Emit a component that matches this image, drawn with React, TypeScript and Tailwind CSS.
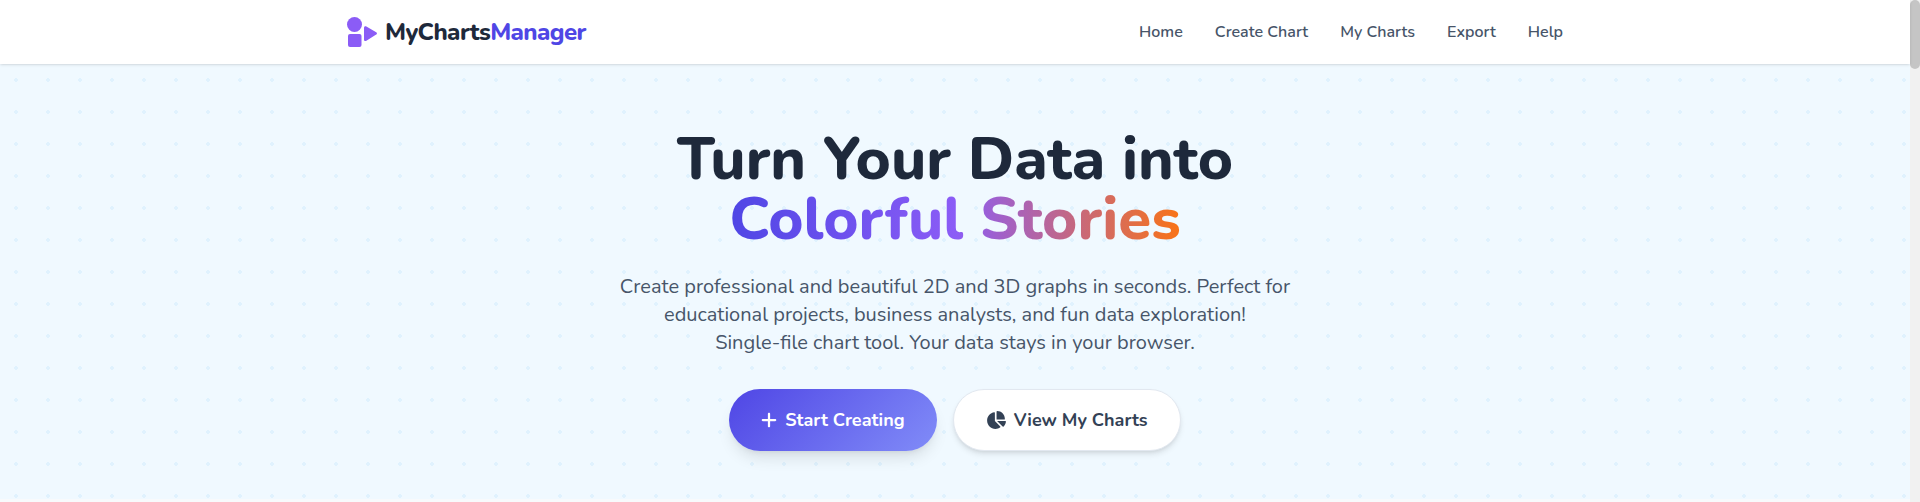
import React from 'react'
import { FaChartPie, FaPlus } from 'react-icons/fa6'

const links = [
  { name: 'Home', href: '#home' },
  { name: 'Create Chart', href: '#create' },
  { name: 'My Charts', href: '#charts' },
  { name: 'Export', href: '#export' },
  { name: 'Help', href: '#help' },
]

function Logo() {
  return (
    <a href="#home" className="flex items-center gap-2">
      <svg viewBox="0 0 30 30" className="h-[30px] w-[30px] fill-[#8b5cf6]">
        <circle cx="7.5" cy="7.5" r="7.5" />
        <rect x="1" y="17" width="13.5" height="13" rx="2" />
        <path d="M17 10.8c0-1.500 1.200-2 2.400-1.400l9.800 5.800c1 .6 1 1.800 0 2.400l-9.800 6.100c-1.200.7-2.400.1-2.400-1.300z" />
      </svg>
      <span className="text-2xl font-extrabold tracking-tight text-[#1e293b]">
        MyCharts<span className="text-[#4f46e5]">Manager</span>
      </span>
    </a>
  )
}

function Header() {
  return (
    <header className="relative bg-white shadow-sm">
      <div className="mx-auto flex h-16 max-w-7xl items-center justify-between px-8">
        <Logo />
        <nav className="flex gap-8">
          {links.map((link) => (
            <a key={link.name} href={link.href} className="font-semibold text-[#475569]">
              {link.name}
            </a>
          ))}
        </nav>
      </div>
    </header>
  )
}

function Hero() {
  return (
    <main className="bg-[#f0f9ff] bg-[radial-gradient(#e0f2fe_2px,transparent_2px)] bg-[size:32px_32px] px-8 pt-[65px] pb-12 text-center">
      <h1 className="mb-6 text-6xl leading-none font-extrabold text-[#1e293b]">
        Turn Your Data into
        <br />
        <span className="bg-[linear-gradient(to_right,#4f46e5,#8b5cf6,#f97316)] bg-clip-text text-transparent">
          Colorful Stories
        </span>
      </h1>
      <p className="mx-auto mb-8 max-w-2xl text-xl leading-7 text-[#475569]">
        Create professional and beautiful 2D and 3D graphs in seconds. Perfect for
        educational projects, business analysts, and fun data exploration!
        <br />
        Single-file chart tool. Your data stays in your browser.
      </p>
      <div className="flex flex-wrap justify-center gap-4">
        <button className="flex items-center gap-2 rounded-full bg-[linear-gradient(135deg,#4f46e5,#818cf8)] px-8 py-4 text-lg leading-[30px] font-bold text-white shadow-lg">
          <FaPlus className="h-[18px] w-4" />
          Start Creating
        </button>
        <button className="flex items-center gap-2 rounded-full border border-[#e2e8f0] bg-white px-8 py-4 text-lg font-bold text-[#334155] shadow-md">
          <FaChartPie className="h-[18px] w-5" />
          View My Charts
        </button>
      </div>
    </main>
  )
}

function App() {
  return (
    <div className="flex min-h-screen bg-[#f8fafc] font-['Nunito','Lato',sans-serif]">
      <div className="flex-1">
        <Header />
        <Hero />
      </div>
      <div className="w-[10px] bg-[#f1f1f1]">
        <div className="h-[69px] rounded-full bg-[#c5c5c5]" />
      </div>
    </div>
  )
}

export default App
